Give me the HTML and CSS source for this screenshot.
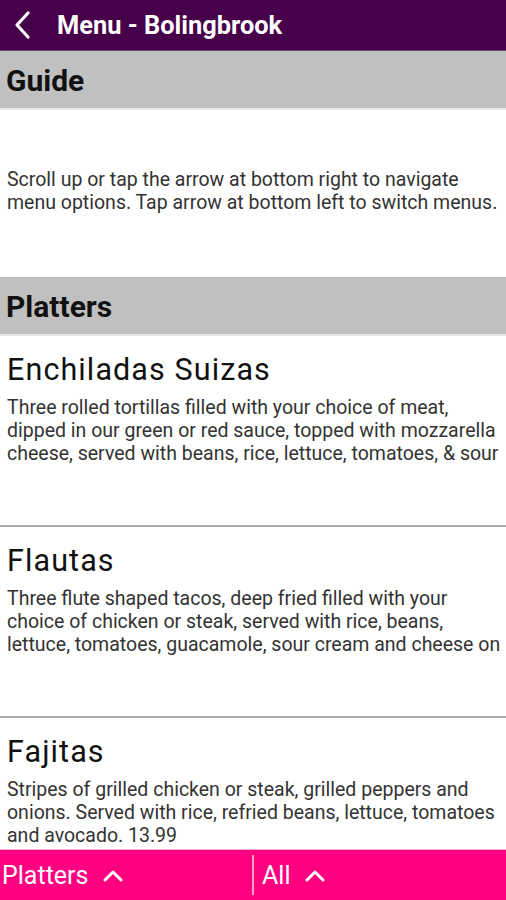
FILE: index.html
```html
<!DOCTYPE html>
<html lang="en">
<head>
    <meta charset="UTF-8">
    <meta name="viewport" content="width=device-width, initial-scale=1.0">
    <title>Menu - Bolingbrook</title>
    <link rel="stylesheet" href="styles.css">
</head>
<body>
    <div class="app">
        <div class="topbar">
            <svg class="back" width="20" height="30" viewBox="0 0 20 30">
                <polyline points="16,3 5,15 16,27" fill="none" stroke="#fff" stroke-width="3.2" stroke-linecap="round" stroke-linejoin="round"/>
            </svg>
            <span class="title">Menu - Bolingbrook</span>
        </div>

        <div class="content">
            <div class="section-head">Guide</div>
            <div class="guide">
                Scroll up or tap the arrow at bottom right to navigate menu options. Tap arrow at bottom left to switch menus.
            </div>

            <div class="section-head">Platters</div>

            <div class="item">
                <div class="item-name">Enchiladas Suizas</div>
                <div class="item-desc">Three rolled tortillas filled with your choice of meat, dipped in our green or red sauce, topped with mozzarella cheese, served with beans, rice, lettuce, tomatoes, &amp; sour cream. 12.99</div>
            </div>
            <div class="item">
                <div class="item-name">Flautas</div>
                <div class="item-desc">Three flute shaped tacos, deep fried filled with your choice of chicken or steak, served with rice, beans, lettuce, tomatoes, guacamole, sour cream and cheese on top. 12.99</div>
            </div>
            <div class="item">
                <div class="item-name">Fajitas</div>
                <div class="item-desc">Stripes of grilled chicken or steak, grilled peppers and onions. Served with rice, refried beans, lettuce, tomatoes and avocado. 13.99</div>
            </div>
        </div>

        <div class="bottombar">
            <div class="picker">
                Platters
                <svg width="20" height="14" viewBox="0 0 20 14"><polyline points="2,12 10,4 18,12" fill="none" stroke="#fff" stroke-width="3" stroke-linecap="round" stroke-linejoin="round"/></svg>
            </div>
            <div class="picker right">
                All
                <svg width="20" height="14" viewBox="0 0 20 14"><polyline points="2,12 10,4 18,12" fill="none" stroke="#fff" stroke-width="3" stroke-linecap="round" stroke-linejoin="round"/></svg>
            </div>
        </div>
    </div>
</body>
</html>
```

FILE: styles.css
```css
body {
    margin: 0;
    font-family: Roboto, "Liberation Sans", sans-serif;
    background-color: white;
}
.app {
    width: 506px;
    height: 900px;
    display: flex;
    flex-direction: column;
    overflow: hidden;
}
.topbar {
    height: 50px;
    flex-shrink: 0;
    background-color: #47004a;
    display: flex;
    align-items: center;
    border-bottom: 1px solid #6a4a6c;
}
.back {
    margin-left: 12px;
    margin-right: 25px;
}
.title {
    color: white;
    font-weight: bold;
    font-size: 25.4px;
}
.content {
    flex: 1;
    overflow: hidden;
}
.section-head {
    background-color: #c0c0c0;
    height: 57px;
    line-height: 60px;
    padding-left: 6px;
    font-size: 30px;
    font-weight: bold;
    color: #111;
    border-bottom: 2px solid #e6e6e6;
}
.guide {
    height: 109px;
    padding: 58px 0 0 7px;
    font-size: 19.5px;
    line-height: 23px;
    color: #333;
}
.item {
    height: 189px;
    border-bottom: 2px solid #a9a9a9;
    padding-left: 7px;
    overflow: hidden;
}
.item-name {
    font-size: 30.5px;
    letter-spacing: 1.1px;
    line-height: 36px;
    color: #111;
    margin-top: 16px;
}
.item-desc {
    font-size: 19.5px;
    line-height: 23px;
    color: #333;
    max-height: 69px;
    overflow: hidden;
    margin-top: 8px;
}
.bottombar {
    height: 50px;
    flex-shrink: 0;
    background-color: #ff0080;
    display: flex;
    align-items: center;
    border-top: 1px solid #ffb0d4;
}
.picker {
    flex: 0 0 252px;
    box-sizing: border-box;
    padding-left: 2px;
    color: white;
    font-size: 25px;
    display: flex;
    align-items: center;
    gap: 15px;
}
.picker.right {
    border-left: 2px solid #ffa0cc;
    padding-left: 8px;
    height: 40px;
}
```
